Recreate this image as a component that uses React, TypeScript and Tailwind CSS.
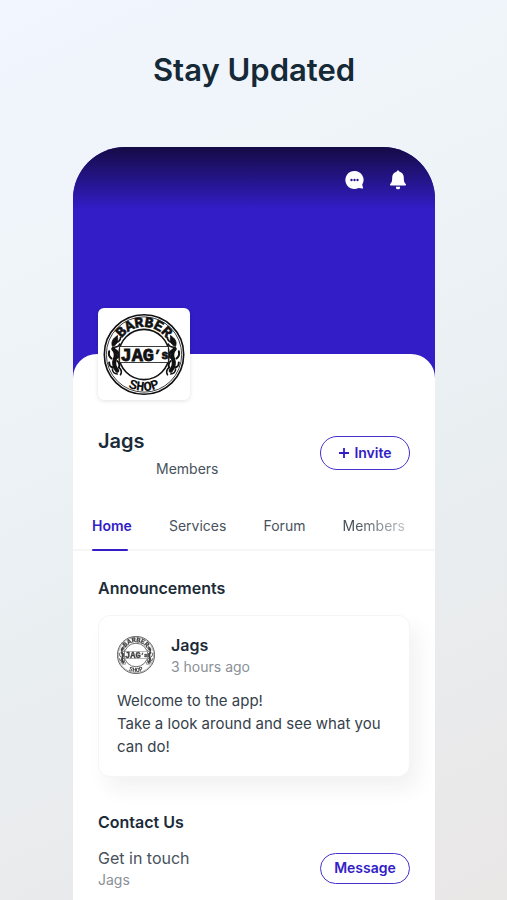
import { useId, useState } from 'react';

const tabs = ['Home', 'Services', 'Forum', 'Members'];

const Scroll = () => (
  <g fill="none" stroke="#111" strokeLinecap="round">
    <path d="M17 27c-5 3-8 7-6 13 5-1 8-6 6-13z" fill="#111" strokeWidth="1" />
    <path d="M16 35c3-1 5-3 5-6m-8 12c4 0 6-1 7-4" strokeWidth="2" />
    <path d="M12 43c4 4 4 8 2 13s-1 9 3 14" strokeWidth="5" />
    <path d="M7 46c-1 4 0 7 3 9m6-10c3 3 3 7 1 9M7 60c0 3 2 6 5 6m5-8c3 2 3 6 2 8" strokeWidth="2.5" />
    <path d="M11 68c0 4 3 6 6 6m2-8c3 2 4 6 2 9" strokeWidth="2" />
  </g>
);

const Logo = ({ className }: { className?: string }) => {
  const id = useId();

  return (
    <svg viewBox="0 0 100 100" className={className} role="img" aria-label="Jag's Barber Shop">
      <defs>
        <path id={`${id}-top`} d="M16 50a34 34 0 0 1 68 0" />
        <path id={`${id}-bottom`} d="M5 50a45 45 0 0 0 90 0" />
      </defs>
      <circle cx="50" cy="50" r="49" fill="#fff" stroke="#111" strokeWidth="2" />
      <circle cx="50" cy="50" r="46.5" fill="none" stroke="#111" strokeWidth="1" />
      <circle cx="50" cy="50" r="31" fill="none" stroke="#111" strokeWidth="2" />
      <Scroll />
      <g transform="translate(100 0) scale(-1 1)">
        <Scroll />
      </g>
      <rect x="20" y="40" width="60" height="20" fill="#fff" stroke="#111" strokeWidth="1" />
      <g fill="#111" className="font-['Liberation_Mono',monospace] font-bold">
        <text x="21" y="58" fontSize="23" stroke="#111" strokeWidth="1">
          JAG
          <tspan dy="-3" fontSize="15">’s</tspan>
        </text>
        <text fontSize="18" textAnchor="middle" stroke="#111" strokeWidth="0.800">
          <textPath href={`#${id}-top`} startOffset="50%">BARBER</textPath>
        </text>
        <text fontSize="17" textAnchor="middle">
          <textPath href={`#${id}-bottom`} startOffset="50%">SHOP</textPath>
        </text>
      </g>
    </svg>
  );
};

const ChatIcon = () => (
  <svg viewBox="0 0 20 20" className="size-5" aria-hidden="true">
    <path d="M10.500 1a9 9 0 1 0 4 17l4 .6c.5.100.8-.3.6-.7l-.9-3.200A9 9 0 0 0 10.500 1z" fill="#fff" />
    <g fill="#2a1995">
      <circle cx="7.500" cy="10" r="1.200" />
      <circle cx="10.500" cy="10" r="1.200" />
      <circle cx="13.500" cy="10" r="1.200" />
    </g>
  </svg>
);

const BellIcon = () => (
  <svg viewBox="0 0 20 20" className="size-5" aria-hidden="true">
    <path
      d="M10 .5c.8 0 1.300.5 1.400 1.200 2.800.6 4.400 2.800 4.400 5.600 0 3.900.4 5.200 2 6.700.5.6.3 1.500-.6 1.500H2.800c-.9 0-1.100-.9-.6-1.500 1.600-1.500 2-2.800 2-6.700 0-2.800 1.600-5 4.400-5.600C8.700 1 9.200.5 10 .5z"
      fill="#fff"
    />
    <path d="M8 16.800h4v1a1.500 1.500 0 0 1-1.500 1.500h-1A1.500 1.500 0 0 1 8 17.800z" fill="#fff" />
  </svg>
);

export default function App() {
  const [active, setActive] = useState('Home');

  return (
    <div className="flex min-h-screen flex-col bg-linear-[155deg,#f1f6ff_0%,#eff4f8_30%,#e9eef1_60%,#eae7e7_100%] pr-[72px] pl-[73px] font-[Inter,sans-serif] text-[#1c2b38]">
      <h1 className="pt-[50px] text-center text-[31px] leading-10 font-semibold text-[#152936]">
        Stay Updated
      </h1>

      {/* Phone */}
      <main className="mt-[57px] flex grow flex-col overflow-hidden rounded-t-[52px] bg-white">
        {/* Cover */}
        <header className="h-[231px] bg-[#321dc6] bg-linear-[180deg,#150b45_0px,#321dc6_62px]">
          <div className="flex justify-end gap-6 pt-[23px] pr-[27px]">
            <button type="button" aria-label="Messages">
              <ChatIcon />
            </button>
            <button type="button" aria-label="Notifications">
              <BellIcon />
            </button>
          </div>
        </header>

        <div className="-mt-6 grow rounded-t-3xl bg-white">
          {/* Profile */}
          <section className="px-[25px]">
            <div className="-mt-[46px] size-[92px] rounded-md bg-white p-[5px] pt-[6px] shadow-[0_1px_4px_rgba(0,0,0,0.12)]">
              <Logo className="size-full" />
            </div>
            <div className="mt-[27px] flex items-start justify-between">
              <div>
                <h2 className="text-xl leading-7 font-semibold">Jags</h2>
                <p className="pl-[58px] text-sm leading-7 text-[#48525c]">Members</p>
              </div>
              <button
                type="button"
                className="mt-[9px] flex h-[34px] w-[90px] items-center justify-center gap-1 rounded-full border border-[#4531cc] text-sm font-semibold text-[#321dc6]"
              >
                <svg viewBox="0 0 12 12" className="size-3" aria-hidden="true">
                  <path d="M6 1v10M1 6h10" stroke="currentColor" strokeWidth="1.800" />
                </svg>
                Invite
              </button>
            </div>
          </section>

          {/* Tabs */}
          <nav className="mt-[31px] flex justify-between border-b-2 border-[#f6f6f7] pr-[30px] pl-[19px]">
            {tabs.map((tab) => (
              <button
                key={tab}
                type="button"
                onClick={() => setActive(tab)}
                className={`-mb-0.5 flex flex-col gap-[11px] text-sm leading-6 last:mask-r-from-20% last:mask-r-to-140% ${
                  tab === active ? 'font-semibold text-[#321dc6]' : 'text-[#48525c]'
                }`}
              >
                {tab}
                <span
                  className={`h-0.5 w-9 rounded-full ${tab === active ? 'bg-[#321dc6]' : 'bg-transparent'}`}
                />
              </button>
            ))}
          </nav>

          {/* Announcements */}
          <section className="px-[25px] pt-[25px]">
            <h2 className="text-base leading-6 font-semibold">Announcements</h2>
            <article className="mt-[15px] rounded-xl border border-[#f4f5f6] bg-white px-[18px] pt-[17px] pb-[18px] shadow-[8px_12px_20px_rgba(30,40,50,0.06)]">
              <div className="flex items-center gap-4">
                <Logo className="size-[38px] opacity-80" />
                <div>
                  <h3 className="text-base leading-6 font-semibold">Jags</h3>
                  <p className="text-sm leading-5 text-[#8a9097]">3 hours ago</p>
                </div>
              </div>
              <p className="mt-3 text-[15px] leading-[23px] text-[#36414c]">
                Welcome to the app!
                <br />
                Take a look around and see what you can do!
              </p>
            </article>
          </section>

          {/* Contact */}
          <section className="px-[25px] pt-[33px]">
            <h2 className="text-base leading-6 font-semibold">Contact Us</h2>
            <div className="mt-3 flex items-center justify-between">
              <div>
                <p className="text-base leading-6 text-[#48525c]">Get in touch</p>
                <p className="text-sm leading-5 text-[#8a9097]">Jags</p>
              </div>
              <button
                type="button"
                className="h-[31px] w-[90px] rounded-full border border-[#4531cc] text-sm font-semibold text-[#321dc6]"
              >
                Message
              </button>
            </div>
          </section>
        </div>
      </main>
    </div>
  );
}
